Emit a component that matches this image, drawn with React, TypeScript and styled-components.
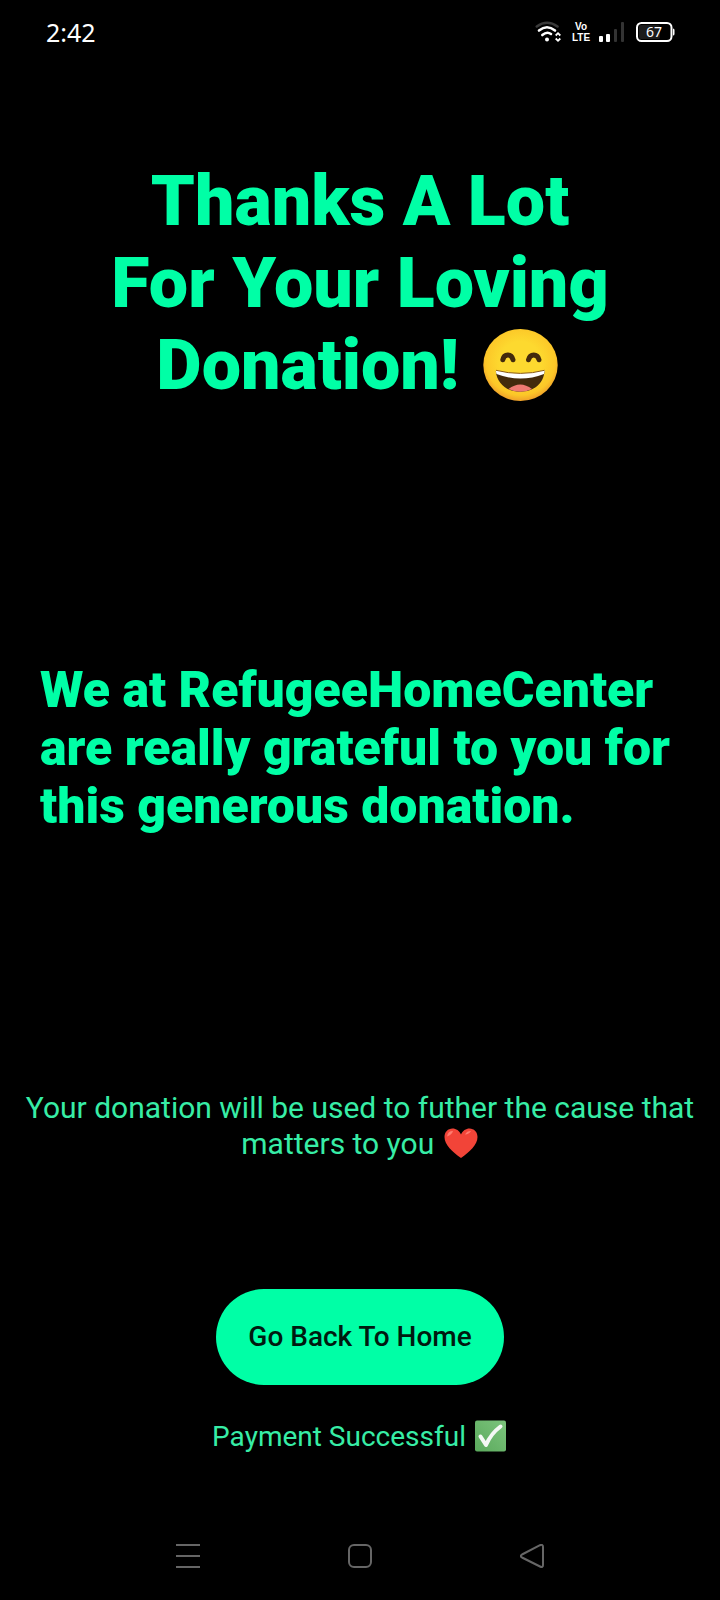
import React from "react";
import styled, { createGlobalStyle } from "styled-components";

const mint = "#00ffa6";
const softMint = "#37eda6";

const GlobalStyle = createGlobalStyle`
  *, *::before, *::after { box-sizing: border-box; }
  html, body { margin: 0; background: #000; }
  body { font-family: Roboto, "Liberation Sans", sans-serif; }
`;

const Screen = styled.div`
  min-height: 100vh;
  display: flex;
  flex-direction: column;
  background: #000;
`;

const StatusBar = styled.header`
  display: flex;
  align-items: center;
  justify-content: space-between;
  height: 64px;
  padding: 0 45px 0 46px;
  color: #fff;
`;

const Clock = styled.time`
  font: 400 25px/32px "Noto Sans", sans-serif;
`;

const StatusIcons = styled.div`
  display: flex;
  align-items: center;
  gap: 11px;
`;

const VoLte = styled.span`
  display: grid;
  justify-items: center;
  width: 16px;
  font: 700 10px/11px "Liberation Sans Narrow", "Liberation Sans", sans-serif;
`;

const Main = styled.main`
  flex: 1;
  display: flex;
  flex-direction: column;
  align-items: center;
  padding-top: 96px;
`;

const Title = styled.h1`
  margin: 0;
  max-width: 560px;
  color: ${mint};
  font-size: 70px;
  font-weight: 900;
  line-height: 82px;
  text-align: center;
`;

const Message = styled.h2`
  align-self: stretch;
  margin: 255px 0 0;
  padding: 0 40px;
  color: ${mint};
  font-size: 50px;
  font-weight: 900;
  line-height: 58px;
`;

const Note = styled.p<{ $gap: number; $size: number }>`
  margin: ${({ $gap }) => $gap}px 0 0;
  padding: 0 24px;
  color: ${softMint};
  font-size: ${({ $size }) => $size}px;
  line-height: 36px;
  text-align: center;
`;

const HomeButton = styled.button`
  min-width: 288px;
  height: 96px;
  margin-top: 127px;
  padding: 0 32px;
  border: 0;
  border-radius: 48px;
  background: ${mint};
  color: #001a10;
  font: 500 28px/36px Roboto, sans-serif;
  cursor: pointer;
`;

const NavBar = styled.nav`
  display: flex;
  justify-content: center;
  gap: 124px;
  height: 68px;
`;

const NavButton = styled.button`
  display: grid;
  place-items: center;
  width: 48px;
  height: 48px;
  padding: 0;
  border: 0;
  background: none;
  color: #666;
`;

const Emoji = styled.svg<{ $drop: number }>`
  vertical-align: -${({ $drop }) => $drop}px;
`;

const Grin = () => (
  <Emoji $drop={12} width="87" height="72" viewBox="0 0 87 72" role="img" aria-label="grinning face">
    <defs>
      <radialGradient id="face" cx="50%" cy="45%" r="55%">
        <stop offset="0.5" stopColor="#fdd92f" />
        <stop offset="0.85" stopColor="#fcc728" />
        <stop offset="1" stopColor="#f0a12a" />
      </radialGradient>
    </defs>
    <ellipse cx="43.500" cy="36" rx="37.200" ry="36" fill="url(#face)" />
    <path d="M25.800 30.800C27 24.400 34.500 24.400 36 30.800M51.500 30.800C53 24.400 60.500 24.400 62 30.800" fill="none" stroke="#432a0c" strokeWidth="5" strokeLinecap="round" />
    <path d="M18.800 42C20 55 30 62.700 43.200 62.700C56.500 62.700 66.500 55 67.600 42Q43.500 49 18.800 42Z" fill="#432a0c" />
    <path d="M31.500 60Q43.200 51 55 60Q50 62.700 43.200 62.700Q36.500 62.700 31.500 60Z" fill="#ef7a72" />
    <path d="M18.800 42Q19 40.600 22 41.700Q43.500 47 65 41.700Q67.700 40.600 67.600 42L67 45Q43.500 54 19.500 45Z" fill="#fff" />
    <path d="M19 41.300Q43.500 47.500 67.500 41.300" fill="none" stroke="#8a5a14" strokeWidth="1" />
  </Emoji>
);

const Heart = () => (
  <Emoji $drop={5} width="37" height="32" viewBox="0 0 37 32" role="img" aria-label="heart">
    <path d="M19 31C10.500 25 2.500 18 2.500 10C2.500 5 6 1.500 10.500 1.500C14 1.500 17.500 3.800 19 7.500C20.500 3.800 24 1.500 27.500 1.500C32 1.500 35.500 5 35.500 10C35.500 18 27.500 25 19 31Z" fill="#f24438" />
    <path d="M5 9.500Q6 4 11 4.100Q10 8 5 9.500ZM23 7.500Q25 4 29 4.100Q27 7.500 23 7.500Z" fill="#ff7c70" />
  </Emoji>
);

const Check = () => (
  <Emoji $drop={6} width="35" height="32" viewBox="0 0 35 32" role="img" aria-label="done">
    <defs>
      <linearGradient id="tile" x1="0" y1="1" x2="1" y2="0">
        <stop offset="0" stopColor="#5aa95c" />
        <stop offset="1" stopColor="#7cc47c" />
      </linearGradient>
    </defs>
    <rect x="2" y="0.500" width="31" height="31" rx="2" fill="url(#tile)" />
    <path d="M7.500 16.500L13 25Q18 13.500 27.500 6.500" fill="none" stroke="#f4f8f4" strokeWidth="4" strokeLinecap="round" strokeLinejoin="round" />
  </Emoji>
);

const Wifi = () => (
  <svg width="26" height="22" viewBox="0 0 26 22" fill="none" stroke="#fff" strokeWidth="2.600" strokeLinecap="round" aria-label="Wi-Fi">
    <path d="M1.800 5.500Q12 -2 22.500 5.500" stroke="#3a3a3a" />
    <path d="M4 9.500Q12 3 20 9.500M7.300 14Q12 10 16 13" />
    <circle cx="12" cy="18.500" r="2" fill="#fff" stroke="none" />
    <path d="M20.700 14.500L23 12.200L25.300 14.500M20.700 17.500L23 19.800L25.300 17.500" strokeWidth="1.800" strokeLinecap="butt" />
  </svg>
);

const Signal = () => (
  <svg width="26" height="20" viewBox="0 0 26 20" aria-label="Signal">
    <rect x="0" y="14" width="4" height="6" rx="1" fill="#fff" />
    <rect x="7" y="12" width="4" height="8" rx="1" fill="#fff" />
    <rect x="15" y="7" width="3" height="13" rx="1" fill="#333" />
    <rect x="22" y="0" width="3" height="20" rx="1" fill="#333" />
  </svg>
);

const Battery = () => (
  <svg width="39" height="20" viewBox="0 0 39 20" aria-label="Battery 67%">
    <rect x="1" y="1" width="34.500" height="18" rx="4.500" fill="none" stroke="#fff" strokeWidth="2" />
    <rect x="3" y="3" width="21" height="14" rx="2" fill="#1c1c1c" />
    <path d="M37 6.500Q38.500 6.500 38.500 8V12Q38.500 13.500 37 13.500Z" fill="#fff" />
    <text x="18" y="15" textAnchor="middle" fill="#fff" fontFamily="Noto Sans, sans-serif" fontSize="14">67</text>
  </svg>
);

export default function App() {
  return (
    <Screen>
      <GlobalStyle />
      <StatusBar>
        <Clock>2:42</Clock>
        <StatusIcons>
          <Wifi />
          <VoLte><span>Vo</span><span>LTE</span></VoLte>
          <Signal />
          <Battery />
        </StatusIcons>
      </StatusBar>
      <Main>
        <Title>Thanks A Lot<br />For Your Loving<br />Donation! <Grin /></Title>
        <Message>We at RefugeeHomeCenter are really grateful to you for this generous donation.</Message>
        <Note $gap={255} $size={30}>Your donation will be used to futher the cause that matters to you <Heart /></Note>
        <HomeButton type="button">Go Back To Home</HomeButton>
        <Note $gap={34} $size={28}>Payment Successful <Check /></Note>
      </Main>
      <NavBar aria-label="System">
        <NavButton type="button" aria-label="Recent apps">
          <svg width="24" height="24" viewBox="0 0 24 24" stroke="currentColor" strokeWidth="2"><path d="M0 1H24M0 12H24M0 23H24" /></svg>
        </NavButton>
        <NavButton type="button" aria-label="Home">
          <svg width="24" height="24" viewBox="0 0 24 24" fill="none" stroke="currentColor" strokeWidth="2"><rect x="1" y="1" width="22" height="22" rx="5" /></svg>
        </NavButton>
        <NavButton type="button" aria-label="Back">
          <svg width="24" height="24" viewBox="0 0 24 24" fill="none" stroke="currentColor" strokeWidth="2"><path d="M2 10.500L20 1.200Q23 0 23 3V21Q23 24 20 22.500L2 13.500Q-0.500 12 2 10.500Z" /></svg>
        </NavButton>
      </NavBar>
    </Screen>
  );
}
